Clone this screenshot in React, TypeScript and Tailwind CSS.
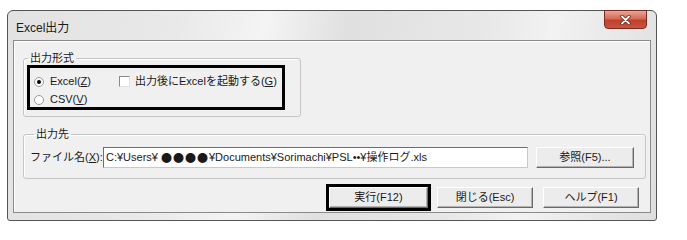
import React from 'react';

function Radio({ checked }: { checked?: boolean }) {
  return (
    <span className="w-[10px] h-[10px] rounded-full border border-[#9a9a9a] bg-white flex items-center justify-center shrink-0">
      {checked && <span className="w-[4px] h-[4px] rounded-full bg-black" />}
    </span>
  );
}

function Btn({ children, w }: { children: React.ReactNode; w: string }) {
  return (
    <div
      className={`${w} h-[21px] flex items-center justify-center bg-[#ececec] border border-t-white border-l-white border-r-[#696969] border-b-[#696969] shadow-[inset_-1px_-1px_0_#b4b4b4] leading-none`}
    >
      {children}
    </div>
  );
}

export default function App() {
  return (
    <div className="w-[687px] h-[240px] bg-white pt-[10px] pl-[7px] font-['Liberation_Sans','Noto_Sans_CJK_JP',sans-serif] text-[11px] text-[#1a1a1a]">
      <div className="w-[650px] h-[211px] flex flex-col rounded-t-[6px] rounded-b-[3px] border border-[#545454] bg-[linear-gradient(100deg,#e2e2e2_0%,#e9e9e9_25%,#f4f4f4_38%,#e0e0e0_50%,#e8e8e8_70%,#f2f2f2_80%,#dedede_100%)] px-[5px] pb-[7px]">
        {/* title bar */}
        <div className="h-[29px] flex items-start justify-between shrink-0">
          <span className="pl-[3px] pt-[11px] text-[12px] leading-none">Excel出力</span>
          <div className="mr-[4px] w-[43px] h-[19px] -mt-px rounded-b-[4px] border border-[#7a2c22] bg-[linear-gradient(180deg,#e9a699_0%,#d46a56_45%,#c2402c_55%,#c9543e_100%)] flex items-center justify-center">
            <svg width="11" height="10" viewBox="0 0 11 10">
              <path d="M2 1.5 L9 8.5 M9 1.5 L2 8.5" stroke="#5a1a12" strokeWidth="3.2" strokeLinecap="round" />
              <path d="M2 1.5 L9 8.5 M9 1.5 L2 8.5" stroke="#ffffff" strokeWidth="1.8" strokeLinecap="round" />
            </svg>
          </div>
        </div>

        {/* client area */}
        <div className="h-[173px] border border-[#8a8a8a] bg-[#f0f0f0] shadow-[inset_1px_1px_0_#ffffff] pl-[9px] pr-[11px] pt-[10px] flex flex-col">
          <fieldset className="w-[278px] border border-[#c6c6c6] rounded-[3px] pb-[6px] shadow-[inset_1px_1px_0_#ffffff]">
            <legend className="ml-[4px] px-[2px] leading-[14px]">出力形式</legend>
            <div className="ml-[3px] w-[258px] h-[45px] border-[3px] border-black pl-[4px] pt-[6px] flex flex-col gap-[3px]">
              <div className="h-[15px] flex items-center">
                <div className="w-[85px] flex items-center gap-[6px]">
                  <Radio checked />
                  <span>
                    Excel(<span className="underline">Z</span>)
                  </span>
                </div>
                <div className="flex items-center gap-[5px]">
                  <span className="w-[11px] h-[11px] bg-white border border-t-[#8a8a8a] border-l-[#8a8a8a] border-r-[#e0e0e0] border-b-[#e0e0e0]" />
                  <span>
                    出力後にExcelを起動する(<span className="underline">G</span>)
                  </span>
                </div>
              </div>
              <div className="h-[15px] flex items-center gap-[6px]">
                <Radio />
                <span>
                  CSV(<span className="underline">V</span>)
                </span>
              </div>
            </div>
          </fieldset>

          <fieldset className="mt-[10px] w-[623px] border border-[#c6c6c6] rounded-[3px] pl-[6px] pt-[6px] pb-[10px] shadow-[inset_1px_1px_0_#ffffff]">
            <legend className="ml-[4px] px-[2px] leading-[14px]">出力先</legend>
            <div className="flex items-center">
              <span className="w-[73px] whitespace-nowrap">
                ファイル名(<span className="underline">X</span>):
              </span>
              <div className="w-[425px] h-[21px] bg-white border border-t-[#6e6e6e] border-l-[#6e6e6e] border-r-[#c8c8c8] border-b-[#c8c8c8] pl-[2px] flex items-center whitespace-nowrap">
                C:¥Users¥
                <span className="ml-[3px] flex items-center font-['Noto_Sans_CJK_JP',sans-serif] text-[11px] leading-none tracking-[1px]">
                  ●●●●
                </span>
                ¥Documents¥Sorimachi¥PSL••¥操作ログ.xls
              </div>
              <div className="ml-[8px]">
                <Btn w="w-[98px]">参照(F5)...</Btn>
              </div>
            </div>
          </fieldset>

          <div className="mt-[5px] flex items-center justify-end">
            <div className="w-[105px] h-[27px] border-[3px] border-black">
              <Btn w="w-[99px]">実行(F12)</Btn>
            </div>
            <div className="ml-[6px]">
              <Btn w="w-[96px]">閉じる(Esc)</Btn>
            </div>
            <div className="ml-[10px]">
              <Btn w="w-[96px]">ヘルプ(F1)</Btn>
            </div>
          </div>
        </div>
      </div>
    </div>
  );
}
